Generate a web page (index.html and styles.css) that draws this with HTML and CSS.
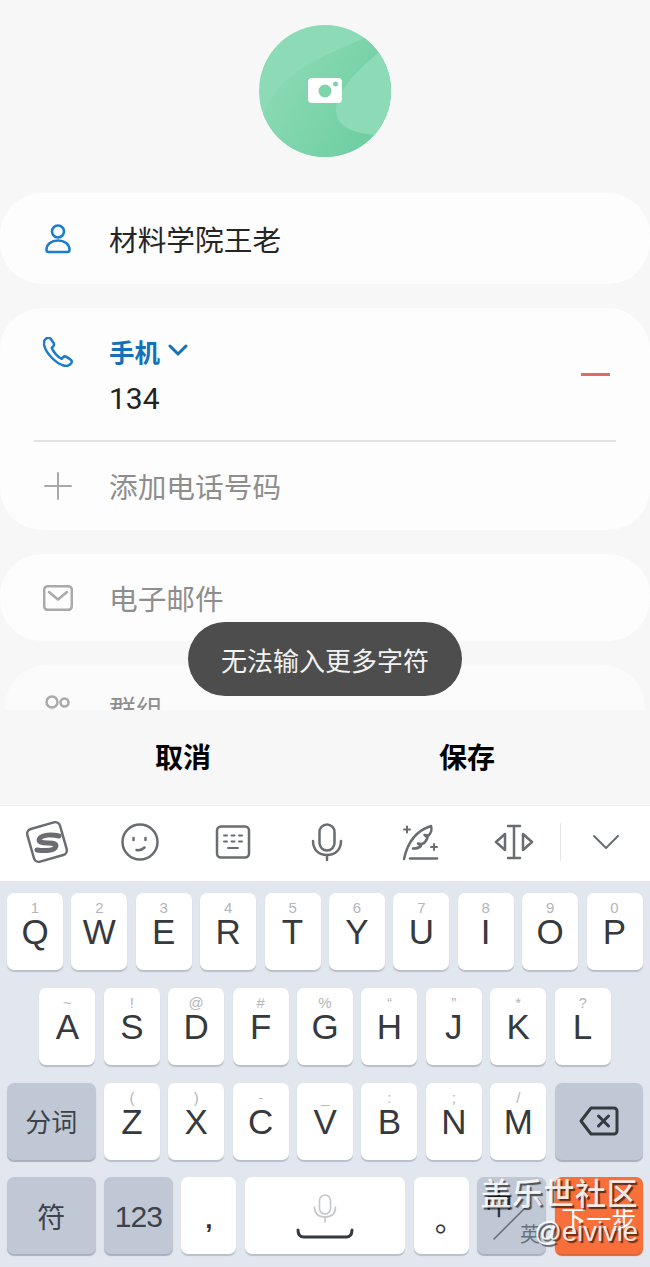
FILE: index.html
```html
<!DOCTYPE html>
<html lang="zh">
<head>
<meta charset="UTF-8">
<title>新建联系人</title>
<link rel="stylesheet" href="styles.css">
</head>
<body>
<div class="form">
	<div class="avatar">
		<svg width="132" height="132" viewBox="0 0 132 132">
			<defs>
				<linearGradient id="band" x1="0" y1="0" x2="1" y2="0.5">
					<stop offset="0.15" stop-color="#8ddbb6"/>
					<stop offset="1" stop-color="#6fcea2"/>
				</linearGradient>
				<clipPath id="disc"><circle cx="66" cy="66" r="66"/></clipPath>
			</defs>
			<g clip-path="url(#disc)">
				<rect width="132" height="132" fill="#8ddbb6"/>
				<path d="M106 13C80 24 40 40 22 60 10 75 0 90 0 110V132H132V13Z" fill="url(#band)"/>
				<path d="M119 28C95 48 77 68 77 85 77 102 95 108 116 110L132 112V28Z" fill="#8ddbb6"/>
			</g>
			<rect x="49" y="53" width="34" height="25" rx="4" fill="#fff"/>
			<circle cx="66" cy="66" r="6.5" fill="#7dd4ab"/>
			<circle cx="76.5" cy="59" r="2.5" fill="#7dd4ab"/>
		</svg>
	</div>

	<div class="card card-name">
		<svg class="field-icon ico-blue" width="30" height="30" viewBox="0 0 30 30">
			<circle cx="15" cy="7.5" r="6"/>
			<path d="M3.5 26c0-6 5-9.500 11.500-9.500S26.500 20 26.500 26c0 1.500-1 2-2 2h-19c-1 0-2-.5-2-2z"/>
		</svg>
		<div class="field-text">材料学院王老</div>
	</div>

	<div class="card card-phone">
		<div class="phone-row">
			<svg class="field-icon phone-icon ico-blue" width="30" height="30" viewBox="0 0 30 30">
				<path d="M3 1.800C1 3 .5 6 1.500 9.500 3.500 16 12 26 20.500 28.500c3 .8 6.500 0 7.800-2.300.8-1.500.3-3-1-3.800l-3.800-2.500c-1.300-.8-2.500-.6-3.500.5l-1.300 1.400c-3.500-1.300-8.500-7-10-11l1.400-1.300c1-1 1.200-2.200.5-3.500L8.200 2.500C7.300 1 5-.2 3 1.800z"/>
			</svg>
			<div class="phone-body">
				<div class="phone-type">手机
					<svg class="ico-blue-dark" width="20" height="12" viewBox="0 0 20 12"><path d="M2 2l8 8 8-8"/></svg>
				</div>
				<div class="phone-number">134</div>
			</div>
			<div class="remove-line"></div>
		</div>
		<div class="card-divider"></div>
		<div class="add-row">
			<svg class="field-icon ico-gray-thin" width="30" height="30" viewBox="0 0 30 30"><path d="M15 2v26M2 15h26"/></svg>
			<div class="field-text hint">添加电话号码</div>
		</div>
	</div>

	<div class="card card-mail">
		<svg class="field-icon ico-gray" width="30" height="26" viewBox="0 0 30 26">
			<rect x="1.200" y="1.200" width="27.600" height="23.600" rx="3.500"/>
			<path d="M6 7l9 7.500L24 7"/>
		</svg>
		<div class="field-text hint">电子邮件</div>
	</div>

	<div class="card card-group">
		<svg class="field-icon ico-gray" width="30" height="30" viewBox="0 0 30 30">
			<circle cx="9" cy="8" r="5.500"/>
			<circle cx="21.500" cy="8.500" r="4"/>
			<path d="M1 26c0-6 3-9 8-9s8 3 8 9"/>
		</svg>
		<div class="field-text hint">群组</div>
	</div>
</div>

<div class="actions">
	<div class="action">取消</div>
	<div class="action">保存</div>
</div>

<div class="toast">无法输入更多字符</div>

<div class="toolbar">
	<div class="tool">
		<svg class="tool-icon" width="48" height="48" viewBox="0 0 48 48">
			<rect x="7" y="7" width="34" height="34" rx="5" transform="rotate(-16 24 24)"/>
			<path class="logo-s" d="M36 18C28 16 20 17 17 20 14 24 19 25 25 25 31 25 35 26 32 30 29 33 20 33 14 32"/>
		</svg>
	</div>
	<div class="tool">
		<svg class="tool-icon" width="40" height="40" viewBox="0 0 40 40">
			<circle cx="20" cy="20" r="17.500"/>
			<path d="M13.500 16v2M25.500 16v2M16.500 28c3 .5 6-.5 8-2.500"/>
		</svg>
	</div>
	<div class="tool">
		<svg class="tool-icon" width="36" height="34" viewBox="0 0 36 34">
			<rect x="2" y="1.500" width="32" height="31" rx="4"/>
			<path class="thin" d="M9 10.500h3M16.500 10.500h3M24 10.500h3M9 16.500h3M16.500 16.500h3M24 16.500h3M13 23h10"/>
		</svg>
	</div>
	<div class="tool">
		<svg class="tool-icon" width="32" height="38" viewBox="0 0 32 38">
			<rect x="8.500" y="1.500" width="15" height="26" rx="7.500"/>
			<path d="M2 18c0 9 6 14 14 14s14-5 14-14M16 32v5"/>
		</svg>
	</div>
	<div class="tool">
		<svg class="tool-icon" width="38" height="38" viewBox="0 0 38 38">
			<path class="thin" d="M6 3.500v6M3 6.500h6M33 21v6M30 24h6"/>
			<path d="M3 36C6 22 14 8 30 3c1 3 0 7-2.500 9.500l-4-.5 3 2.500c-1 3-3 5.500-5.500 6.500l-4-.5 3 2.500c-2 2-5 2.500-8 2.500"/>
			<path d="M9 35.500h27"/>
		</svg>
	</div>
	<div class="tool">
		<svg class="tool-icon" width="42" height="36" viewBox="0 0 42 36">
			<path d="M15 2h12M21 2v32M15 34h12M12 10L3 18l9 8zM30 10l9 8-9 8z"/>
		</svg>
	</div>
	<div class="tool-sep"></div>
	<div class="tool tool-last">
		<svg class="tool-icon" width="28" height="16" viewBox="0 0 28 16"><path class="thin" d="M2 2l12 12L26 2"/></svg>
	</div>
</div>

<div class="keyboard">
	<div class="key-row">
		<div class="key"><span class="alt">1</span><span class="letter">Q</span></div>
		<div class="key"><span class="alt">2</span><span class="letter">W</span></div>
		<div class="key"><span class="alt">3</span><span class="letter">E</span></div>
		<div class="key"><span class="alt">4</span><span class="letter">R</span></div>
		<div class="key"><span class="alt">5</span><span class="letter">T</span></div>
		<div class="key"><span class="alt">6</span><span class="letter">Y</span></div>
		<div class="key"><span class="alt">7</span><span class="letter">U</span></div>
		<div class="key"><span class="alt">8</span><span class="letter">I</span></div>
		<div class="key"><span class="alt">9</span><span class="letter">O</span></div>
		<div class="key"><span class="alt">0</span><span class="letter">P</span></div>
	</div>
	<div class="key-row row-center">
		<div class="key"><span class="alt">~</span><span class="letter">A</span></div>
		<div class="key"><span class="alt">!</span><span class="letter">S</span></div>
		<div class="key"><span class="alt">@</span><span class="letter">D</span></div>
		<div class="key"><span class="alt">#</span><span class="letter">F</span></div>
		<div class="key"><span class="alt">%</span><span class="letter">G</span></div>
		<div class="key"><span class="alt">“</span><span class="letter">H</span></div>
		<div class="key"><span class="alt">”</span><span class="letter">J</span></div>
		<div class="key"><span class="alt">*</span><span class="letter">K</span></div>
		<div class="key"><span class="alt">?</span><span class="letter">L</span></div>
	</div>
	<div class="key-row">
		<div class="key key-fn w-side key-word">分词</div>
		<div class="key"><span class="alt">(</span><span class="letter">Z</span></div>
		<div class="key"><span class="alt">)</span><span class="letter">X</span></div>
		<div class="key"><span class="alt">-</span><span class="letter">C</span></div>
		<div class="key"><span class="alt">_</span><span class="letter">V</span></div>
		<div class="key"><span class="alt">:</span><span class="letter">B</span></div>
		<div class="key"><span class="alt">;</span><span class="letter">N</span></div>
		<div class="key"><span class="alt">/</span><span class="letter">M</span></div>
		<div class="key key-fn w-side">
			<svg class="ico-dark" width="40" height="30" viewBox="0 0 40 30">
				<path d="M12 2h23c1.500 0 3 1.200 3 3v20c0 1.800-1.500 3-3 3H12L2 15z"/>
				<path d="M19.500 10l10 10M29.500 10l-10 10"/>
			</svg>
		</div>
	</div>
	<div class="key-row">
		<div class="key key-fn w-side key-sym">符</div>
		<div class="key key-fn w-mid key-num">123</div>
		<div class="key w-small key-comma">,</div>
		<div class="key key-space">
			<svg class="ico-light" width="24" height="30" viewBox="0 0 24 30">
				<rect x="6.500" y="1" width="11" height="19" rx="5.500"/>
				<path d="M1.500 13c0 7 4 10 10.500 10s10.500-3 10.500-10M12 23v5"/>
			</svg>
			<svg class="ico-dark" width="58" height="12" viewBox="0 0 58 12"><path d="M2 2c0 5 2 7 6 7h42c4 0 6-2 6-7"/></svg>
		</div>
		<div class="key w-small key-stop">。</div>
		<div class="key key-fn w-mid key-lang">
			<span class="lang-main">中</span>
			<span class="lang-sub">英</span>
			<svg class="lang-slash" width="40" height="40" viewBox="0 0 40 40"><path d="M2 38L38 2"/></svg>
		</div>
		<div class="key key-next w-side">下一步</div>
	</div>
</div>

<div class="watermark">
	<div class="wm-title">盖乐世社区</div>
	<div class="wm-user">@eivivie</div>
</div>
</body>
</html>
```

FILE: styles.css
```css
html {
	background-color: #f7f7f7;
}

body {
	position: relative;
	width: 650px;
	height: 1267px;
	margin: 0;
	overflow: hidden;
	background-color: #f7f7f7;
	font-family: "Noto Sans CJK SC", "Liberation Sans", sans-serif;
	color: #252525;
}

svg {
	display: block;
	fill: none;
	stroke-linecap: round;
	stroke-linejoin: round;
}

/* scrolling form */
.form {
	height: 710px;
	padding-top: 25px;
	box-sizing: border-box;
	overflow: hidden;
}

.avatar {
	display: flex;
	justify-content: center;
	margin-bottom: 36px;
}

.card {
	margin-bottom: 24px;
	background-color: #fdfdfd;
	border-radius: 42px;
}

.card-name,
.card-mail,
.card-group {
	display: flex;
	align-items: center;
	padding-left: 43px;
}

.card-name {
	height: 91px;
}

.card-phone {
	height: 222px;
}

.card-mail {
	height: 87px;
}

.card-group {
	height: 87px;
	margin: 0 5px;
	padding-left: 38px;
	background-color: #fbfbfb;
}

.field-icon {
	flex: 0 0 30px;
}

.field-text {
	margin-left: 36px;
	font-size: 28.700px;
	line-height: 40px;
}

.hint {
	color: #8e8e8e;
}

.card-group .field-text {
	font-size: 27px;
}

.ico-blue {
	stroke: #1a7ccb;
	stroke-width: 2.500;
}

.ico-blue-dark {
	stroke: #1470b8;
	stroke-width: 3;
}

.ico-gray {
	stroke: #a9a9a9;
	stroke-width: 2.500;
}

.ico-gray-thin {
	stroke: #a9a9a9;
	stroke-width: 2;
}

.ico-dark {
	stroke: #333a40;
	stroke-width: 3;
}

.ico-light {
	stroke: #c4c6c9;
	stroke-width: 1.600;
}

.phone-row {
	display: flex;
	height: 132px;
	padding-left: 43px;
	box-sizing: border-box;
}

.phone-icon {
	margin-top: 29px;
}

.phone-body {
	margin-left: 36px;
	padding-top: 24px;
}

.phone-type {
	display: flex;
	align-items: center;
	gap: 8px;
	height: 36px;
	font-size: 25.500px;
	font-weight: 700;
	color: #1470b8;
}

.phone-number {
	margin-top: 8px;
	font-family: "Roboto", "Liberation Sans", sans-serif;
	font-size: 30px;
	line-height: 46px;
	color: #222;
}

.remove-line {
	align-self: center;
	width: 29px;
	height: 3px;
	margin-left: auto;
	margin-right: 40px;
	background-color: #df6a66;
}

.card-divider {
	height: 2px;
	margin: 0 34px;
	background-color: #e3e3e3;
}

.add-row {
	display: flex;
	align-items: center;
	height: 88px;
	padding-left: 43px;
}

/* save / cancel */
.actions {
	display: flex;
	height: 95px;
	padding: 0 41px 3px;
	box-sizing: border-box;
	align-items: center;
}

.action {
	flex: 1;
	text-align: center;
	font-size: 28px;
	font-weight: 700;
	color: #000;
}

.toast {
	position: absolute;
	left: 188px;
	top: 622px;
	width: 274px;
	height: 74px;
	border-radius: 37px;
	background-color: #4d4d4d;
	color: #f2f2f2;
	font-size: 26px;
	line-height: 76px;
	text-align: center;
}

/* input method */
.toolbar {
	display: flex;
	align-items: center;
	height: 76px;
	padding-bottom: 3px;
	background-color: #fff;
	border-top: 1px solid #f1f1f1;
	box-sizing: border-box;
}

.tool {
	display: flex;
	flex: 0 0 93.400px;
	justify-content: center;
	align-items: center;
}

.tool-last {
	flex: 1;
}

.tool-sep {
	width: 1px;
	height: 38px;
	background-color: #e6e6e6;
}

.tool-icon {
	stroke: #696d72;
	stroke-width: 2.500;
}

.tool-icon .thin {
	stroke-width: 2;
}

.tool-icon .logo-s {
	stroke-width: 5;
}

.keyboard {
	display: flex;
	flex-direction: column;
	gap: 17.800px;
	height: 386px;
	padding: 12px 7px 0;
	box-sizing: border-box;
	background-color: #e2e7ef;
}

.key-row {
	display: flex;
	gap: 8.400px;
	height: 77px;
}

.row-center {
	justify-content: center;
}

.key {
	display: flex;
	flex: 0 0 56px;
	flex-direction: column;
	align-items: center;
	border-radius: 7px;
	background-color: #fff;
	box-shadow: 0 2px 1px #b8bfcb;
	font-family: "Liberation Sans", sans-serif;
	overflow: hidden;
}

.alt {
	margin-top: 7px;
	height: 15px;
	font-size: 15px;
	line-height: 15px;
	color: #b4b6b9;
}

.letter {
	font-size: 35px;
	line-height: 34px;
	color: #36393d;
}

.key-fn {
	justify-content: center;
	background-color: #c0c8d5;
	box-shadow: 0 2px 1px #a8b0be;
	font-family: "Noto Sans CJK SC", sans-serif;
	font-size: 26px;
	color: #3c434c;
}

.w-side {
	flex-basis: 88.500px;
}

.w-mid {
	flex-basis: 69px;
}

.w-small {
	flex-basis: 55px;
}

.key-word {
	padding-bottom: 2px;
	box-sizing: border-box;
}

.key-sym {
	font-size: 28px;
}

.key-num {
	padding-top: 2px;
	box-sizing: border-box;
	font-family: "Liberation Sans", sans-serif;
	font-size: 30px;
	letter-spacing: -1px;
}

.key-comma {
	padding-top: 27px;
	box-sizing: border-box;
	font-size: 26px;
	font-weight: 700;
	color: #333;
}

.key-stop {
	padding: 19px 0 0 17px;
	box-sizing: border-box;
	font-family: "Noto Sans CJK SC", sans-serif;
	font-size: 30px;
	color: #333;
}

.key-space {
	flex: 1;
	padding-top: 17px;
	box-sizing: border-box;
}

.key-space .ico-dark {
	margin-top: 4px;
}

.key-lang {
	position: relative;
	padding: 10px 6px 8px 8px;
	box-sizing: border-box;
	justify-content: space-between;
}

.lang-main {
	align-self: flex-start;
	font-size: 28px;
	line-height: 32px;
	color: #2f353c;
}

.lang-sub {
	align-self: flex-end;
	font-size: 20px;
	line-height: 24px;
	color: #66707c;
}

.lang-slash {
	position: absolute;
	left: 15px;
	top: 24px;
	stroke: #5f6873;
	stroke-width: 1.500;
}

.key-next {
	justify-content: center;
	padding-top: 4px;
	box-sizing: border-box;
	background-color: #f96f3a;
	box-shadow: 0 2px 1px #d9643a;
	font-family: "Noto Sans CJK SC", sans-serif;
	font-size: 25px;
	color: #fff;
}

/* forum watermark */
.watermark {
	position: absolute;
	right: 12px;
	top: 1172px;
	text-align: right;
	color: rgba(255, 255, 255, 0.88);
	text-shadow: 2px 2px 1px rgba(0, 0, 0, 0.6);
}

.wm-title {
	font-size: 31px;
	font-weight: 500;
	letter-spacing: 0.5px;
	line-height: 40px;
}

.wm-user {
	font-family: "Liberation Sans", sans-serif;
	font-size: 27.400px;
	line-height: 34px;
	margin-top: 3px;
}
```
